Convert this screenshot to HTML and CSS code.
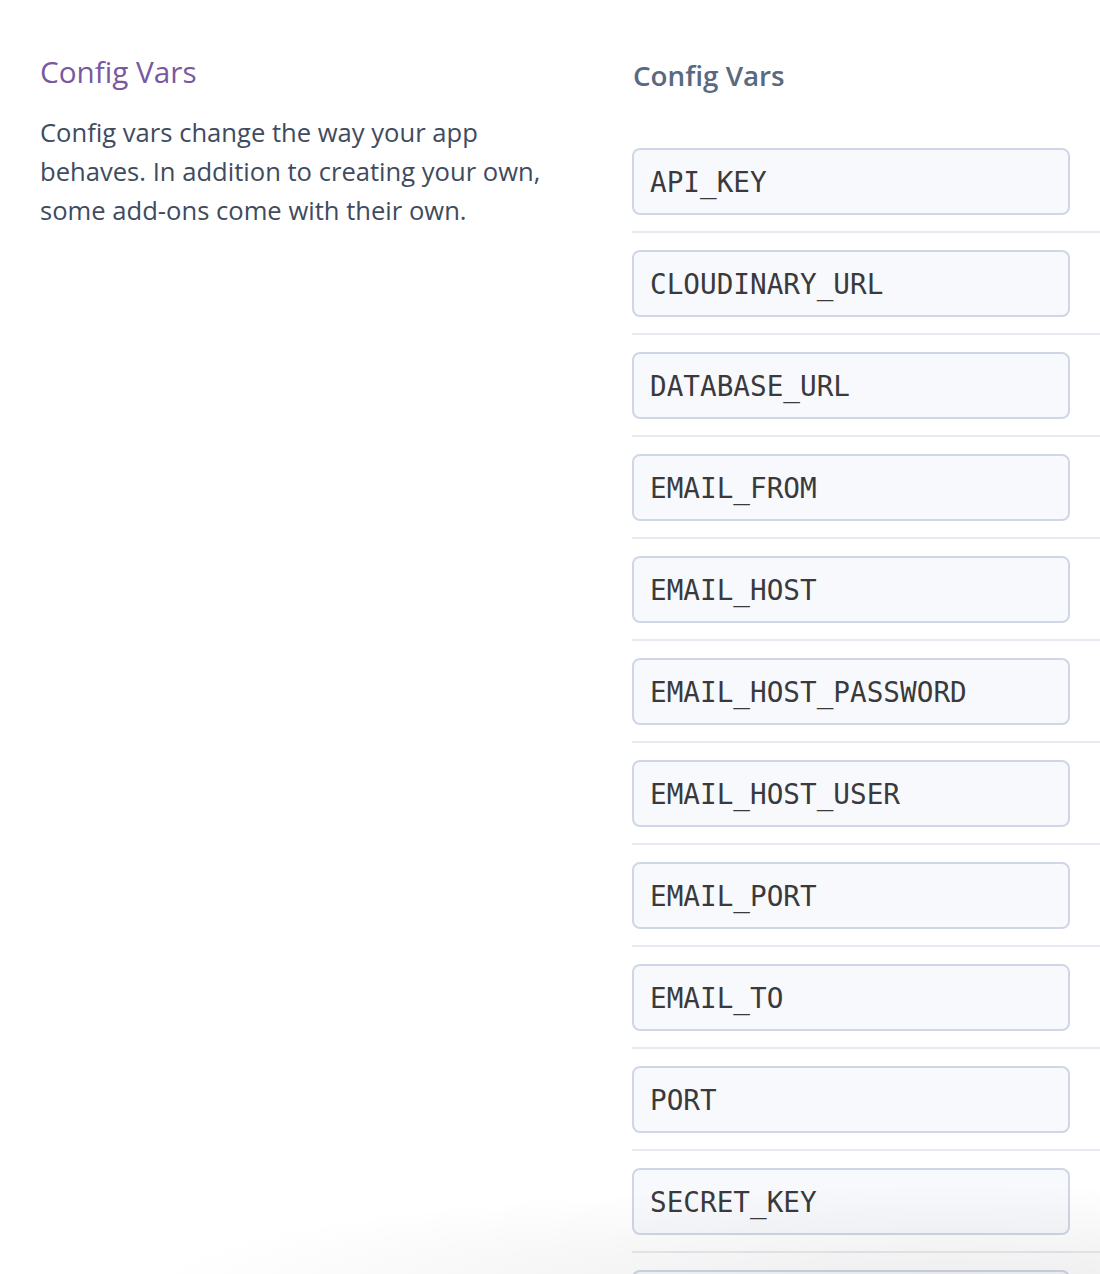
FILE: index.html
```html
<!DOCTYPE html>
<html>
<head>
<meta charset="utf-8">
<link rel="stylesheet" href="styles.css">
</head>
<body>
<div class="page">
  <section class="intro">
    <h2 class="intro-title">Config Vars</h2>
    <p class="intro-text">Config vars change the way your app behaves. In addition to creating your own, some add-ons come with their own.</p>
  </section>
  <section class="vars">
    <h3 class="vars-title">Config Vars</h3>
    <ul class="var-list">
      <li class="var-row"><div class="var-key">API_KEY</div></li>
      <li class="var-row"><div class="var-key">CLOUDINARY_URL</div></li>
      <li class="var-row"><div class="var-key">DATABASE_URL</div></li>
      <li class="var-row"><div class="var-key">EMAIL_FROM</div></li>
      <li class="var-row"><div class="var-key">EMAIL_HOST</div></li>
      <li class="var-row"><div class="var-key">EMAIL_HOST_PASSWORD</div></li>
      <li class="var-row"><div class="var-key">EMAIL_HOST_USER</div></li>
      <li class="var-row"><div class="var-key">EMAIL_PORT</div></li>
      <li class="var-row"><div class="var-key">EMAIL_TO</div></li>
      <li class="var-row"><div class="var-key">PORT</div></li>
      <li class="var-row"><div class="var-key">SECRET_KEY</div></li>
      <li class="var-row"><div class="var-key">&nbsp;</div></li>
    </ul>
  </section>
</div>
<div class="bottom-shade"></div>
</body>
</html>
```
FILE: styles.css
```css
html, body {
  margin: 0;
  padding: 0;
  background: #ffffff;
  overflow: hidden;
}
body {
  width: 1100px;
  height: 1274px;
  position: relative;
}
.page {
  display: grid;
  grid-template-columns: 592px 468px;
  padding-left: 40px;
  padding-top: 52px;
}
.intro-title {
  margin: 0;
  font-family: "Open Sans", Lato, sans-serif;
  font-weight: 400;
  font-size: 29.7px;
  line-height: 40px;
  color: #79589f;
}
.intro-text {
  margin: 21px 0 0 0;
  width: 520px;
  font-family: "Open Sans", Lato, sans-serif;
  font-size: 25.6px;
  line-height: 39px;
  color: #3f4b5e;
}
.vars {
  display: flex;
  flex-direction: column;
}
.vars-title {
  margin: 3px 0 0 1px;
  font-family: "Open Sans", Lato, sans-serif;
  font-weight: 600;
  font-size: 27.8px;
  line-height: 40px;
  color: #596981;
}
.var-list {
  list-style: none;
  margin: 53px 0 0 0;
  padding: 0;
}
.var-row {
  padding-bottom: 16px;
  margin-bottom: 17px;
  border-bottom: 2px solid #e7eaf0;
}
.var-key {
  box-sizing: border-box;
  width: 438px;
  height: 67px;
  padding: 1px 16px 0 16px;
  display: flex;
  align-items: center;
  background: #f8f9fc;
  border: 2px solid #cfd7e6;
  border-radius: 8px;
  font-family: "DejaVu Sans Mono", monospace;
  font-size: 27.7px;
  color: #3a3a3c;
  white-space: nowrap;
}
.bottom-shade {
  position: absolute;
  left: 0;
  right: 0;
  bottom: 0;
  height: 110px;
  pointer-events: none;
  background: radial-gradient(ellipse 800px 100px at 950px 120px, rgba(0,0,0,0.07), rgba(0,0,0,0) 100%);
}
```
